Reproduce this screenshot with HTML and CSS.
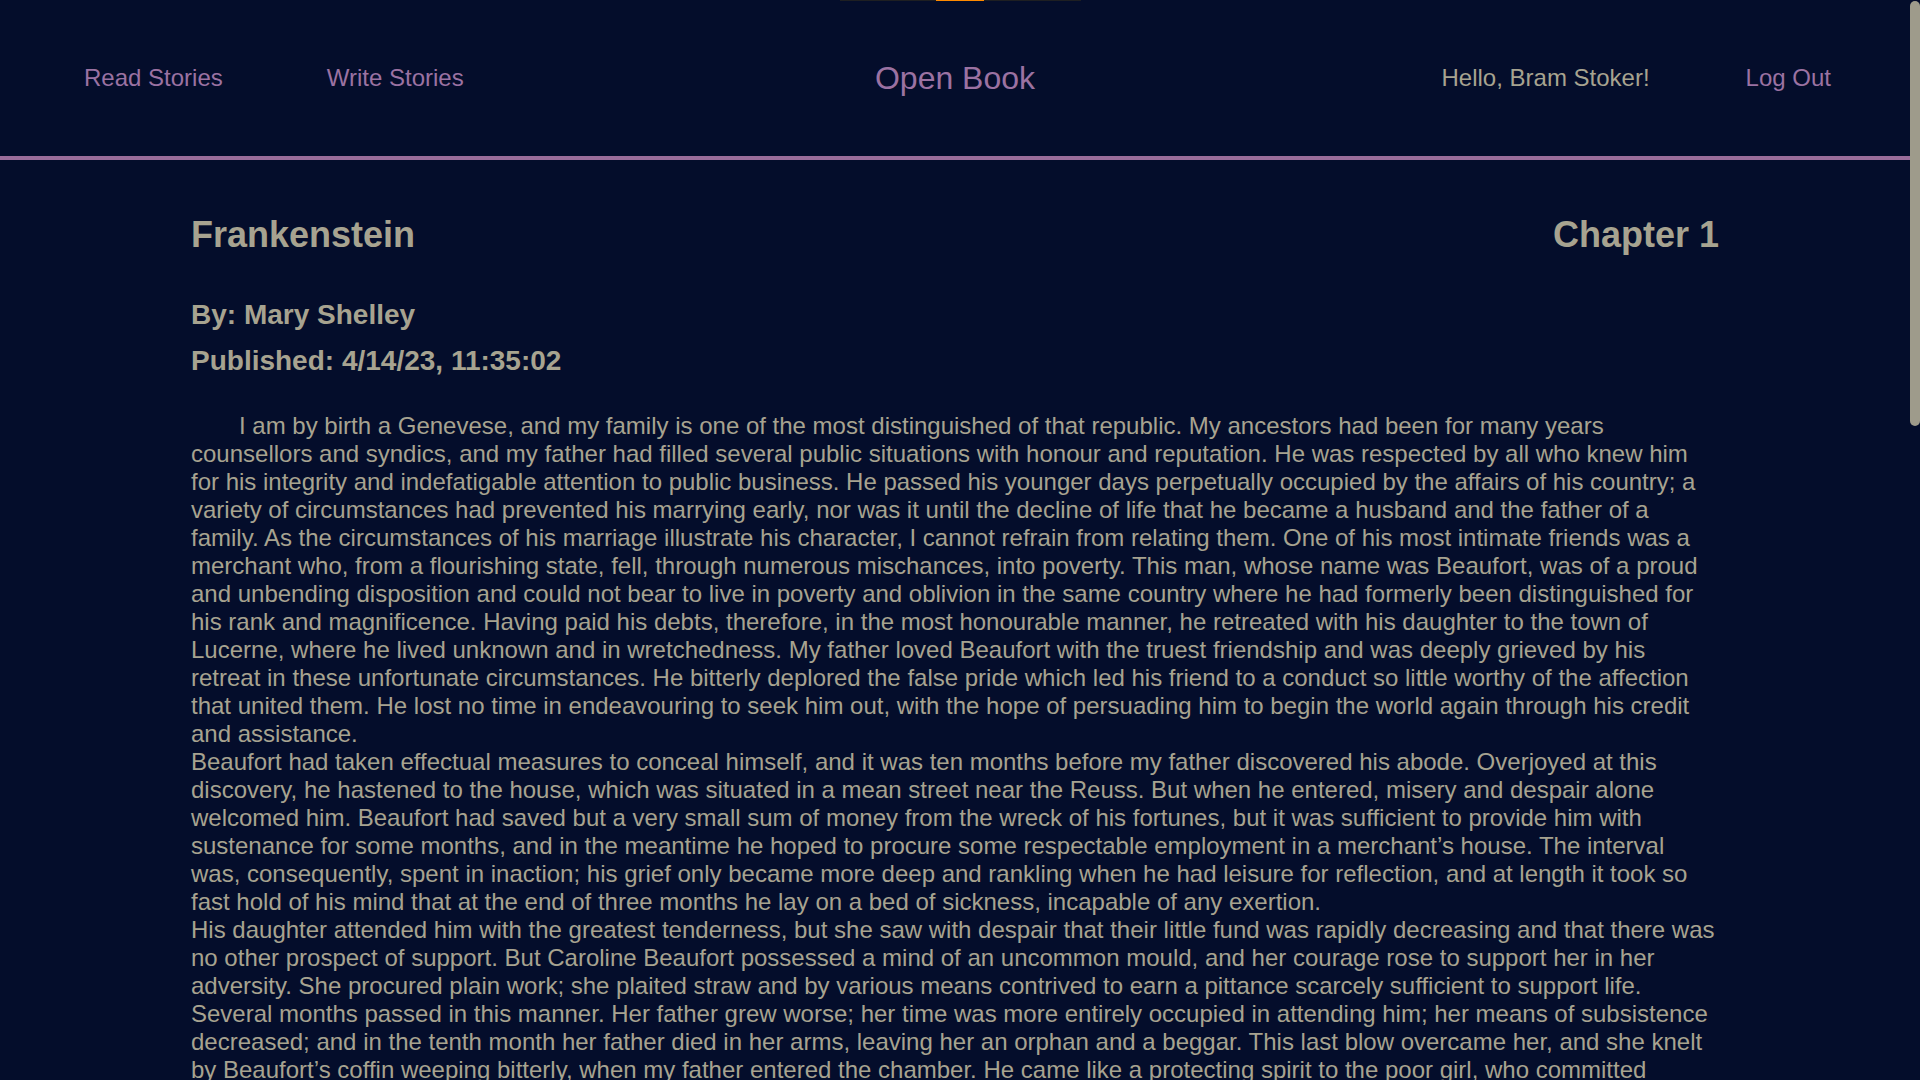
FILE: index.html
```html
<!DOCTYPE html>
<html lang="en">
<head>
<meta charset="utf-8">
<title>Open Book - Frankenstein</title>
<link rel="stylesheet" href="styles.css">
</head>
<body>
<div class="loadbar"><span class="loadbar-fill"></span></div>
<div class="page">
  <header class="topnav">
    <nav class="nav-left">
      <a class="nav-link" href="#">Read Stories</a>
      <a class="nav-link" href="#">Write Stories</a>
    </nav>
    <a class="brand" href="#">Open Book</a>
    <nav class="nav-right">
      <span class="greeting">Hello, Bram Stoker!</span>
      <a class="nav-link" href="#">Log Out</a>
    </nav>
  </header>
  <main class="story">
    <div class="story-head">
      <h2 class="story-title">Frankenstein</h2>
      <h2 class="story-chapter">Chapter 1</h2>
    </div>
    <h3 class="story-author">By: Mary Shelley</h3>
    <h3 class="story-date">Published: 4/14/23, 11:35:02</h3>
    <p class="story-text">I am by birth a Genevese, and my family is one of the most distinguished of that republic. My ancestors had been for many years counsellors and syndics, and my father had filled several public situations with honour and reputation. He was respected by all who knew him for his integrity and indefatigable attention to public business. He passed his younger days perpetually occupied by the affairs of his country; a variety of circumstances had prevented his marrying early, nor was it until the decline of life that he became a husband and the father of a family. As the circumstances of his marriage illustrate his character, I cannot refrain from relating them. One of his most intimate friends was a merchant who, from a flourishing state, fell, through numerous mischances, into poverty. This man, whose name was Beaufort, was of a proud and unbending disposition and could not bear to live in poverty and oblivion in the same country where he had formerly been distinguished for his rank and magnificence. Having paid his debts, therefore, in the most honourable manner, he retreated with his daughter to the town of Lucerne, where he lived unknown and in wretchedness. My father loved Beaufort with the truest friendship and was deeply grieved by his retreat in these unfortunate circumstances. He bitterly deplored the false pride which led his friend to a conduct so little worthy of the affection that united them. He lost no time in endeavouring to seek him out, with the hope of persuading him to begin the world again through his credit and assistance.<br>Beaufort had taken effectual measures to conceal himself, and it was ten months before my father discovered his abode. Overjoyed at this discovery, he hastened to the house, which was situated in a mean street near the Reuss. But when he entered, misery and despair alone welcomed him. Beaufort had saved but a very small sum of money from the wreck of his fortunes, but it was sufficient to provide him with sustenance for some months, and in the meantime he hoped to procure some respectable employment in a merchant’s house. The interval was, consequently, spent in inaction; his grief only became more deep and rankling when he had leisure for reflection, and at length it took so fast hold of his mind that at the end of three months he lay on a bed of sickness, incapable of any exertion.<br>His daughter attended him with the greatest tenderness, but she saw with despair that their little fund was rapidly decreasing and that there was no other prospect of support. But Caroline Beaufort possessed a mind of an uncommon mould, and her courage rose to support her in her adversity. She procured plain work; she plaited straw and by various means contrived to earn a pittance scarcely sufficient to support life. Several months passed in this manner. Her father grew worse; her time was more entirely occupied in attending him; her means of subsistence decreased; and in the tenth month her father died in her arms, leaving her an orphan and a beggar. This last blow overcame her, and she knelt by Beaufort’s coffin weeping bitterly, when my father entered the chamber. He came like a protecting spirit to the poor girl, who committed herself to his care; and after the interment of his friend he conducted her to Geneva and placed her under the protection of a relation. Two years after this event Caroline became his wife.</p>
  </main>
</div>
<div class="scroll-thumb"></div>
</body>
</html>
```
FILE: styles.css
```css
html {
  overflow: hidden;
  background: #040d2b;
}
body {
  margin: 0;
  background: #040d2b;
  color: #a7a390;
  font-family: "Liberation Sans", Arial, sans-serif;
}
.page {
  margin-right: 10px;
}
.topnav {
  height: 156px;
  border-bottom: 4px solid #9a6d9b;
  display: grid;
  grid-template-columns: 1fr auto 1fr;
  align-items: center;
}
.nav-left {
  display: flex;
  gap: 104px;
  padding-left: 84px;
}
.nav-right {
  display: flex;
  justify-content: flex-end;
  gap: 96px;
  padding-right: 79px;
}
.nav-link, .brand {
  color: #9b72a2;
  text-decoration: none;
}
.nav-link, .greeting {
  font-size: 24px;
}
.brand {
  font-size: 32px;
}
.story {
  width: 80%;
  margin: 0 auto;
  padding-top: 54px;
  padding-bottom: 40px;
}
.story-head {
  display: flex;
  justify-content: space-between;
}
.story-title, .story-chapter {
  margin: 0;
  font-size: 36px;
  font-weight: bold;
}
.story-author, .story-date {
  margin: 0;
  font-size: 28px;
  font-weight: bold;
}
.story-author {
  margin-top: 43px;
}
.story-date {
  margin-top: 14px;
}
.story-text {
  margin: 35px 0 0;
  font-size: 24px;
  text-indent: 48px;
}
.loadbar {
  position: fixed;
  top: 0;
  left: 840px;
  width: 241px;
  height: 1px;
  background: #1e1f22;
}
.loadbar-fill {
  position: absolute;
  left: 96px;
  width: 48px;
  height: 1px;
  background: #ff8a00;
}
.scroll-thumb {
  position: fixed;
  top: 1px;
  right: 0;
  width: 10px;
  height: 425px;
  border-radius: 5px;
  background: #9e9b8b;
}
```
